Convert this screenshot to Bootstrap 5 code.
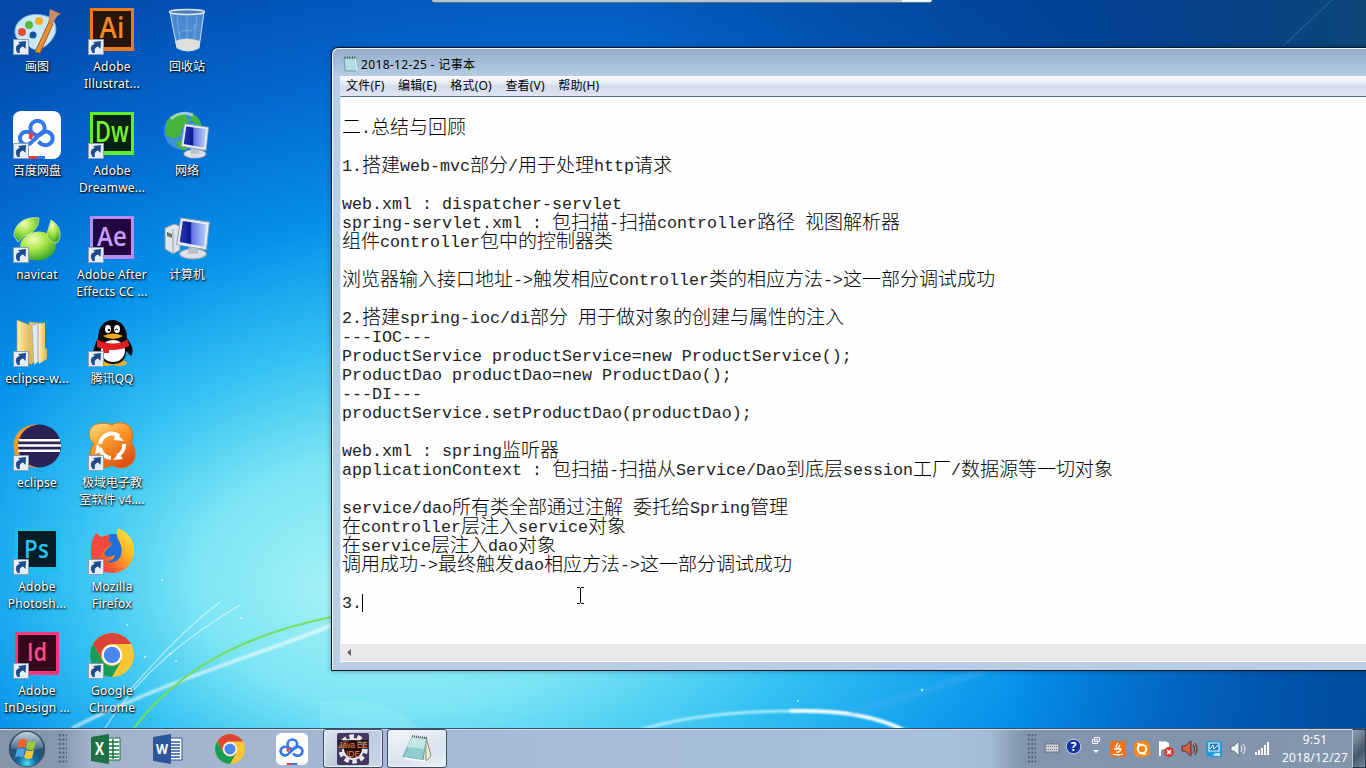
<!DOCTYPE html>
<html lang="zh-CN">
<head>
<meta charset="utf-8">
<title>Desktop</title>
<link href="https://cdn.jsdelivr.net/npm/bootstrap@5.3.0/dist/css/bootstrap.min.css" rel="stylesheet">
<style>
body{width:1366px;height:768px;font:12px/17px "Noto Sans","Noto Sans CJK SC",sans-serif;background:#0450b4;color:#000}
.wall{left:0;top:0;width:1366px;height:768px}
.icons{display:grid;grid-auto-flow:column;grid-template-rows:repeat(7,104px);grid-auto-columns:75px;justify-content:start;height:728px}
.shortcut{width:74px;padding-top:7px;color:#fff;text-align:center;white-space:nowrap;text-shadow:1px 1px 2px #000,0 1px 2px rgba(0,0,0,.8)}
.shortcut svg{display:block;margin-bottom:3px;overflow:visible}
.shortcut svg text{stroke:currentColor;stroke-width:0;text-shadow:none}
.ltn{letter-spacing:.22px}
.dock{left:432px;top:0;width:500px;height:3px;background:linear-gradient(90deg,#b2c6d0 94%,#e9fbff 94%);border-bottom:1px solid #56748a;border-radius:0 0 3px 3px}
.win{left:331px;top:47px;width:1050px;height:624px;border:1px solid #0a1828;border-radius:7px 0 0 0;background:#b9cde4;box-shadow:inset 1px 1px 0 #eef7fd,0 0 5px rgba(0,0,30,.35);padding:1px 0 0 8px}
.titlebar{height:27px;margin-left:-7px;padding:3px 0 0 10px;gap:3px;background:linear-gradient(#96aecb,#b4cde4);border-radius:6px 0 0 0}
.titlebar span{letter-spacing:.35px}
.menus{height:20px;background:linear-gradient(#fafcff 0,#e4eaf6 38%,#d3dbec 50%,#dfe4f2 100%);padding-left:6px;gap:13.5px;line-height:20px;font-size:12px;letter-spacing:.2px}
.page{height:548px;background:#fdfefd;border-top:1px solid #4d6b8c;border-left:1px solid #e8eef4;padding:3px 0 0 1px}
.page pre{font:16.66px/19px "Liberation Mono",monospace;color:#222;margin:0;overflow:visible}
.page .han{font:300 19px/0 "Noto Sans CJK SC",sans-serif;vertical-align:-1px;color:#000}
.page .ln{height:19px;white-space:pre}
.caret-bar{display:inline-block;width:1px;height:18px;background:#000;vertical-align:-4px}
.hscroll{height:18px;background:#e9e9ea;border-bottom:1px solid #fff;padding:5px 0 0 6px}
.ibeam{left:576px;top:587px}
.taskbar{left:0;top:728px;width:1366px;height:40px;border-top:1px solid #38506c;box-shadow:inset 0 1px 0 #d0dcea;background:linear-gradient(90deg,#8494a9 0,#8797ad 62px,#a3b2cb 90px,#a5bad6 480px,#a7c0dc 950px,#a2bad5 990px,#8295ad 1022px,#8394ab 1366px)}
.slot{width:62px}
.task{width:60px;height:39px;border:1px solid #3c4d64;border-radius:3px;background:linear-gradient(135deg,#e0e7f1,#bccadd 50%,#cbd8e8);box-shadow:inset 0 0 0 1px #e9f0f8}
.task.on{background:linear-gradient(160deg,#f2f6fa,#dae4ee 60%,#e9f0f6)}
.grip{width:9px;height:31px;background:radial-gradient(circle,#3c4859 0,#3c4859 .8px,transparent 1.1px) 0 0/3.6px 4.4px}
.clock{width:74px;color:#fff;font-size:12px;line-height:18px;text-align:center}
.peek{width:14px;height:39px;border:1px solid #2f3c4c;border-left-color:#bccbd9;background:linear-gradient(135deg,#95a3b3,#46576a 60%,#76869a)}
</style>
</head>
<body class="position-relative overflow-hidden m-0">
<svg class="wall position-absolute" viewBox="0 0 1366 768">
<defs>
<radialGradient id="sky" gradientUnits="userSpaceOnUse" cx="0" cy="0" r="1" fx="-.27" fy=".08" gradientTransform="translate(620 540) scale(1020 640)">
<stop offset="0" stop-color="#a6f2f6"/><stop offset=".2" stop-color="#7ce5f4"/><stop offset=".38" stop-color="#2fbff2"/><stop offset=".56" stop-color="#0590ea"/><stop offset=".76" stop-color="#0469d0"/><stop offset="1" stop-color="#0448a8"/></radialGradient>
<linearGradient id="dark" x1="0" x2="1"><stop offset=".45" stop-color="#003a80" stop-opacity="0"/><stop offset=".78" stop-color="#003c88" stop-opacity=".65"/><stop offset="1" stop-color="#0d4674" stop-opacity=".9"/></linearGradient>
<linearGradient id="deep" x1="0" x2="1"><stop offset=".74" stop-color="#00489c" stop-opacity="0"/><stop offset="1" stop-color="#004896" stop-opacity=".85"/></linearGradient>
<filter id="soft"><feGaussianBlur stdDeviation="1.2"/></filter>
</defs>
<rect width="1366" height="768" fill="url(#sky)"/>
<rect width="1366" height="300" fill="url(#dark)"/>
<rect y="560" width="1366" height="208" fill="url(#deep)"/>
<path d="M320 702Q380 690 425 733H320Z" fill="#9df0fa" opacity=".3"/>
<g fill="none" stroke="#fff">
<path d="M72 728C180 675 260 655 345 620" stroke-width="3" opacity=".7" filter="url(#soft)"/>
<path d="M105 728C142 670 190 635 240 605M130 690C165 650 190 625 220 602" stroke-width="1.300" opacity=".55"/>
<path d="M134 728C175 674 237 636 332 617" stroke="#75dd60" stroke-width="2.200"/>
<path d="M640 730C690 714 745 711 795 711S875 716 912 734" stroke="#b9f1ff" stroke-width="2.500" filter="url(#soft)"/>
<path d="M790 711C835 710 875 714 908 732" stroke-width="3" filter="url(#soft)"/>
<path d="M1332 0L1283 46" stroke="#4283bd" opacity=".6"/>
<path d="M850 712C900 700 930 690 990 668" stroke="#46aff4" stroke-width="8" opacity=".3" filter="url(#soft)"/>
</g>
<g fill="#d8feff" opacity=".8"><circle cx="127" cy="625" r="1"/><circle cx="170" cy="654" r="1.200"/><circle cx="241" cy="618" r="1"/><circle cx="145" cy="657" r="1.200"/><circle cx="176" cy="661" r="1"/><circle cx="162" cy="580" r="1"/><circle cx="922" cy="690" r="1.200"/><circle cx="798" cy="701" r="1"/></g>
</svg>

<svg width="0" height="0" class="position-absolute"><defs>
<linearGradient id="gOr" x1="0" x2=".6" y2="1"><stop offset="0" stop-color="#ffe58a"/><stop offset=".45" stop-color="#fb9a2c"/><stop offset="1" stop-color="#de5411"/></linearGradient>
<linearGradient id="gBlue"><stop offset="0" stop-color="#2638b6"/><stop offset=".4" stop-color="#0b1a92"/><stop offset=".45" stop-color="#5d74e2"/><stop offset="1" stop-color="#bcd0fa"/></linearGradient>
<radialGradient id="gGreen" cx=".4" cy=".25" r=".75"><stop offset="0" stop-color="#f0ffb4"/><stop offset=".5" stop-color="#a4e444"/><stop offset="1" stop-color="#3ba52a"/></radialGradient>
<linearGradient id="gFox" x1="1" x2="0" y2="1"><stop offset="0" stop-color="#fff44a"/><stop offset=".4" stop-color="#ffae22"/><stop offset=".7" stop-color="#fb5a31"/><stop offset="1" stop-color="#e42264"/></linearGradient>
<linearGradient id="gYel"><stop offset="0" stop-color="#fff0a8"/><stop offset="1" stop-color="#dcb14f"/></linearGradient>
<symbol id="arrow" viewBox="0 0 16 16"><path d="M.5.5h15v15H.5z" fill="#e9eff8" stroke="#8d9cb0"/><path d="M4.500 14C1.500 9.500 3 5.500 7 5L5 3l8-1-.5 8-2.500-2.500C7.500 8 6 10 7 14z" fill="#1d4a8c"/></symbol>
<symbol id="chrome" viewBox="0 0 44 44"><circle cx="22" cy="22" r="22" fill="#fbc535"/><path d="M3 11A22 22 0 0 1 41 11H22A11 11 0 0 0 12.500 27.500z" fill="#db4437"/><path d="M3 11A22 22 0 0 0 22 44L31.500 27.500A11 11 0 0 1 12.500 27.500z" fill="#189c57"/><circle cx="22" cy="22" r="10.200" fill="#fff"/><circle cx="22" cy="22" r="8.200" fill="#4b87ed"/></symbol>
<symbol id="pan" viewBox="0 0 48 48"><rect width="48" height="48" rx="8" fill="#fff"/><g fill="none" stroke="#3377ed" stroke-width="4"><circle cx="24.500" cy="17" r="7.200"/><path d="M19 30.500A6.500 6.500 0 1 1 18 22.500M18.500 30.500C23 29 26 21.500 31 20.800A6.800 6.800 0 1 1 31.500 34C28 34 27 32 25.500 30.500"/></g><path d="M17 20l4 3.500-2.500 5-3-1z" fill="#ed3e45"/><path d="M16 45h8v3h-8z" fill="#ed3e45"/><path d="M24 45h8v3h-8z" fill="#3377ed"/></symbol>
<symbol id="screen" viewBox="0 0 38 42"><ellipse cx="20" cy="36" rx="13" ry="5" fill="#dce1e7" stroke="#98a4b1"/><path d="M16 27l9 3v6h-10z" fill="#b6c0cc"/><path d="M8 1l28 4-3 27L4 27z" fill="#e9edf0" stroke="#92a0b0"/><path d="M10 4l23 3-2 22L7 24.500z" fill="url(#gBlue)"/></symbol>
</defs></svg>

<main class="icons position-relative">
<div class="shortcut"><svg width="75" height="48" viewBox="-13 0 75 48"><path d="M2 26C1 14 14 5 29 8c14 2 17 14 11 23C33 42 21 46 16 39c-4-5-13-4-14-13z" fill="#c9e8f7" stroke="#7bafd1"/><circle cx="9" cy="25" r="4" fill="#e84c38"/><circle cx="16" cy="18" r="4" fill="#56b83a"/><circle cx="26" cy="14" r="4" fill="#f6ae24"/><circle cx="20" cy="28" r="3.500" fill="#13529b"/><path d="M22 45L36 15l4 2L27 46z" fill="#e79138" stroke="#a85b1c"/><path d="M35 15C37 8 36 5 37 2l11 5c-5 2-6 6-8 10z" fill="#c78d62"/><use href="#arrow" y="32" width="16" height="16"/></svg>画图</div>
<div class="shortcut"><svg width="75" height="48" viewBox="-13 0 75 48"><use href="#pan" width="48" height="48"/><use href="#arrow" y="32" width="16" height="16"/></svg>百度网盘</div>
<div class="shortcut ltn"><svg width="75" height="48" viewBox="-13 0 75 48"><ellipse cx="25" cy="31" rx="18" ry="14.500" transform="rotate(-8 25 31)" fill="url(#gGreen)"/><path d="M1 21C1 9 12 1 26 3 26 13 19 19 11 21L5 27z" fill="url(#gGreen)" stroke="#e4f9b9" stroke-width=".7"/><path d="M38 5c9 5 12 16 6 23-6 0-10-5-10-9z" fill="url(#gGreen)" stroke="#e4f9b9" stroke-width=".7"/><use href="#arrow" y="32" width="16" height="16"/></svg>navicat</div>
<div class="shortcut ltn"><svg width="75" height="48" viewBox="-13 0 75 48"><path d="M4 1l15 6v39L4 36z" fill="url(#gYel)" stroke="#c59a42" stroke-width=".6"/><path d="M16 3l15 1v36l-12 4z" fill="#e4bf68"/><path d="M19 6l10-2v36l-8 6z" fill="#e6eaee" stroke="#8c98a0" stroke-width=".6"/><path d="M25 6v36" stroke="#9aa7af"/><path d="M27 7l5-4v26l2 1v10l-8 5z" fill="url(#gYel)"/><use href="#arrow" y="32" width="16" height="16"/></svg>eclipse-w...</div>
<div class="shortcut ltn"><svg width="75" height="48" viewBox="-13 0 75 48"><circle cx="22" cy="23" r="21.500" fill="#f39a28"/><circle cx="26.500" cy="23" r="21.500" fill="#2c2255"/><path d="M6 17.200h41M5 22.500h43M5 27.800h42" stroke="#fff" stroke-width="2.500"/><use href="#arrow" y="32" width="16" height="16"/></svg>eclipse</div>
<div class="shortcut ltn"><svg width="75" height="48" viewBox="-13 0 75 48"><path d="M2 1h44v43H2z" fill="#1dbfe8"/><path d="M5 4h38v36H5z" fill="#061c26"/><text x="23.500" y="31" font-family="Open Sans" font-size="26" font-weight="600" textLength="25" lengthAdjust="spacingAndGlyphs" text-anchor="middle" fill="#24c3f3">Ps</text><use href="#arrow" y="32" width="16" height="16"/></svg>Adobe<br>Photosh...</div>
<div class="shortcut ltn"><svg width="75" height="48" viewBox="-13 0 75 48"><path d="M2 1h44v43H2z" fill="#fc3780"/><path d="M5 4h38v36H5z" fill="#36061b"/><text x="24" y="30" font-family="Open Sans" font-size="26" font-weight="600" textLength="20" lengthAdjust="spacingAndGlyphs" text-anchor="middle" fill="#ff4b96">Id</text><use href="#arrow" y="32" width="16" height="16"/></svg>Adobe<br>InDesign ...</div>

<div class="shortcut ltn"><svg width="75" height="48" viewBox="-13 0 75 48"><path d="M2 1h44v43H2z" fill="#ee7a1d"/><path d="M5 4h38v36H5z" fill="#281509"/><text x="24" y="31" font-family="Open Sans" font-size="28" font-weight="600" textLength="25" lengthAdjust="spacingAndGlyphs" text-anchor="middle" fill="#fc8622">Ai</text><use href="#arrow" y="32" width="16" height="16"/></svg>Adobe<br>Illustrat...</div>
<div class="shortcut ltn"><svg width="75" height="48" viewBox="-13 0 75 48"><path d="M2 1h44v43H2z" fill="#62ef26"/><path d="M5 4h38v36H5z" fill="#082315"/><text x="24" y="31" font-family="Open Sans" font-size="28" font-weight="600" textLength="34" lengthAdjust="spacingAndGlyphs" text-anchor="middle" fill="#79f22c">Dw</text><use href="#arrow" y="32" width="16" height="16"/></svg>Adobe<br>Dreamwe...</div>
<div class="shortcut ltn"><svg width="75" height="48" viewBox="-13 0 75 48"><path d="M2 1h44v43H2z" fill="#b98bf5"/><path d="M5 4h38v36H5z" fill="#210740"/><text x="24" y="31" font-family="Open Sans" font-size="27" font-weight="600" textLength="30" lengthAdjust="spacingAndGlyphs" text-anchor="middle" fill="#ca9cfb">Ae</text><use href="#arrow" y="32" width="16" height="16"/></svg>Adobe After<br>Effects CC ...</div>
<div class="shortcut"><svg width="75" height="48" viewBox="-13 0 75 48"><ellipse cx="18" cy="44" rx="8" ry="3" fill="#f8ae20"/><ellipse cx="31" cy="44" rx="8" ry="3" fill="#f8ae20"/><path d="M10 19C10-5 39-5 39 19c6 8 7 14 4 18l-5-5c0 9-5 13-13 13S12 40 12 32l-5 5C4 33 6 27 10 19z" fill="#090909"/><ellipse cx="25" cy="32" rx="12" ry="11" fill="#fff"/><path d="M9 20c9 6 23 6 31 0l1 7c-9 5-22 5-32 1z" fill="#df1d20"/><path d="M15 27h6v7h-6z" fill="#df1d20"/><ellipse cx="20" cy="10" rx="3" ry="4" fill="#fff"/><ellipse cx="29" cy="10" rx="3" ry="4" fill="#fff"/><circle cx="21" cy="11" r="1.200"/><path d="M27 11q1.500-2 3 0" fill="none" stroke="#000"/><path d="M15 17q10-5 20 0-10 6-20 0" fill="#faad1c"/><use href="#arrow" y="32" width="16" height="16"/></svg>腾讯QQ</div>
<div class="shortcut"><svg width="75" height="48" viewBox="-13 0 75 48"><path d="M24 2C29-2 42-1 44 8c2 6 0 9-1 12 5 5 6 16 0 21-5 5-14 5-19 1-8 5-18 2-21-5-2-6 0-13 3-16C-2 14 1 3 9 1c6-1 12-1 15 1z" fill="url(#gOr)" stroke="#d77116"/><path d="M12 21A12 12 0 0 1 31 13M36 21A12 12 0 0 1 29 33M23 35A12 12 0 0 1 12 25" fill="none" stroke="#fff" stroke-width="4"/><path d="M27 9l9 9-10-1zM35 36l-10 1 6-7zM9 21l7 7-9 3z" fill="#fff"/><use href="#arrow" y="32" width="16" height="16"/></svg>极域电子教<br>室软件 v4....</div>
<div class="shortcut ltn"><svg width="75" height="48" viewBox="-13 0 75 48"><circle cx="25" cy="23" r="16" fill="#1f6fd6"/><path d="M30 1c9 4 17 11 16 24C45 38 36 46 24 46 9 46 0 34 4 19L8 6l5 4c4-2 7-1 9-2l-2 6 4 3-6 6c-3 3-1 7 3 7l6-2c-1 4-4 6-9 7 13 3 20-8 13-21-3-5-2-9-1-13z" fill="url(#gFox)"/><path d="M8 6l5 4c4-2 7-1 9-2l-2 6 4 3-6 4-7 8-7 5C1 21 4 12 8 6z" fill="#f4483f"/><use href="#arrow" y="32" width="16" height="16"/></svg>Mozilla<br>Firefox</div>
<div class="shortcut ltn"><svg width="75" height="48" viewBox="-13 0 75 48"><use href="#chrome" x="2" y="2" width="44" height="44"/><use href="#arrow" y="32" width="16" height="16"/></svg>Google<br>Chrome</div>

<div class="shortcut"><svg width="75" height="48" viewBox="-13 0 75 48"><path d="M7 5h34l-5 36q-11 6-22 0z" fill="#85b7e6" fill-opacity=".55" stroke="#c9dff2"/><path d="M12 34q11-5 25 0l-1 7q-11 6-22 0z" fill="#dfdfd9"/><path d="M14 10l3 26M34 9l-3 25M24 10v24M16 27c7-10 12 5 16-10" stroke="#b6d6f5" opacity=".4" fill="none"/><ellipse cx="24" cy="5" rx="17.500" ry="2.500" fill="#527fae" stroke="#dce8f2" stroke-width="1.500"/></svg>回收站</div>
<div class="shortcut"><svg width="75" height="48" viewBox="-13 0 75 48"><circle cx="20" cy="20" r="19" fill="#398fda"/><path d="M3 13C6 4 15 1 22 3l4 8-7 6-2 8-7 3-7-4zM27 2c7 2 11 7 12 15l-6-4-6-5zM13 31l9-3 5 7-5 4c-6 0-8-3-9-8z" fill="#45b43b"/><path d="M8 8c7-6 15-7 22-4" stroke="#d5f2ee" stroke-width="3" opacity=".6" fill="none"/><use href="#screen" x="14" y="12" width="34" height="36"/></svg>网络</div>
<div class="shortcut"><svg width="75" height="48" viewBox="-13 0 75 48"><path d="M2 13l9-4 6 2v24l-7 4-8-5z" fill="#dfe5e9" stroke="#8799a8"/><path d="M4 17l5 2v4l-5-2z" fill="#61786d"/><path d="M10 14v24" stroke="#91a2b0"/><use href="#screen" x="9" y="2" width="40" height="43"/></svg>计算机</div>
</main>

<div class="dock position-absolute"></div>

<section class="win position-absolute">
<header class="titlebar d-flex align-items-center">
<svg width="15" height="16" viewBox="0 0 15 16"><path d="M1 2h11l2 13H2z" fill="#a9d9dc" stroke="#648f96" stroke-width=".7"/><path d="M12 2l2 13" stroke="#fff"/><path d="M1.500 1.500h11" stroke="#3d4b50" stroke-dasharray="1 1.500" stroke-width="2"/><path d="M3 6h8M3.500 9h8M4 12h7" stroke="#d9f5f5" stroke-width=".8"/></svg>
<span>2018-12-25 - 记事本</span></header>
<nav class="menus d-flex"><span>文件(F)</span><span>编辑(E)</span><span>格式(O)</span><span>查看(V)</span><span>帮助(H)</span></nav>
<div class="page"><pre id="note">

二.总结与回顾

1.搭建web-mvc部分/用于处理http请求

web.xml : dispatcher-servlet
spring-servlet.xml : 包扫描-扫描controller路径 视图解析器
组件controller包中的控制器类

浏览器输入接口地址-&gt;触发相应Controller类的相应方法-&gt;这一部分调试成功

2.搭建spring-ioc/di部分 用于做对象的创建与属性的注入
---IOC---
ProductService productService=new ProductService();
ProductDao productDao=new ProductDao();
---DI---
productService.setProductDao(productDao);

web.xml : spring监听器
applicationContext : 包扫描-扫描从Service/Dao到底层session工厂/数据源等一切对象

service/dao所有类全部通过注解 委托给Spring管理
在controller层注入service对象
在service层注入dao对象
调用成功-&gt;最终触发dao相应方法-&gt;这一部分调试成功

3.</pre></div>
<div class="hscroll"><svg class="d-block" width="6" height="8" viewBox="0 0 6 8"><path d="M5 0v7L1 3.500z" fill="#666"/></svg></div>
</section>

<svg class="ibeam position-absolute" width="9" height="17" viewBox="0 0 9 17"><path d="M1 .5h2.500l1 1 1-1H8M4.500 1v15M1 16.500h2.500l1-1 1 1H8" fill="none" stroke="#000"/></svg>

<footer class="taskbar position-absolute d-flex align-items-center">
<svg class="flex-shrink-0" width="54" height="39" viewBox="0 0 54 39"><defs><radialGradient id="orb" cx=".5" cy=".9"><stop offset="0" stop-color="#48e2fb"/><stop offset=".5" stop-color="#166a9e"/><stop offset="1" stop-color="#235073"/></radialGradient><linearGradient id="shine" x2="0" y2="1"><stop offset="0" stop-color="#fff" stop-opacity=".75"/><stop offset="1" stop-color="#fff" stop-opacity=".1"/></linearGradient></defs><circle cx="27" cy="20" r="17.800" fill="url(#orb)" stroke="#42566b"/><path d="M11 19a16 16 0 0 1 32 0q-16 6-32 0z" fill="url(#shine)"/><path d="M19 11q4-2 8 0l-2 8q-4-2-8 0z" fill="#ee6132"/><path d="M28 12q4 2 8 0l-2 8q-4 2-8-.5z" fill="#98c93b"/><path d="M17 20.500q4-2 8 0l-2 8q-4-2-8 0z" fill="#4aa5e6"/><path d="M26 21q4 2 8 0l-2 8q-4 2-8-.5z" fill="#fcc830"/></svg>
<i class="grip ms-1"></i>
<div class="slot d-flex justify-content-center ms-2"><svg width="30" height="30" viewBox="0 0 30 30"><path d="M15 4h14v22H15z" fill="#fff" stroke="#1e7145"/><path d="M18 8h10M18 12h10M18 16h10M18 20h10M18 23h10M22 5v20" stroke="#1e7145" stroke-width="1.500"/><path d="M0 3l18-3v30L0 27z" fill="#1e7145"/><text x="8.500" y="21" font-family="Open Sans" font-size="17" font-weight="700" text-anchor="middle" fill="#fff" textLength="9" lengthAdjust="spacingAndGlyphs">X</text></svg></div>
<div class="slot d-flex justify-content-center"><svg width="30" height="30" viewBox="0 0 30 30"><path d="M15 4h14v22H15z" fill="#fff" stroke="#2b579a"/><path d="M17 8h10M17 11h10M17 14h10M17 17h10M17 20h10M17 23h10" stroke="#2b579a" stroke-width="1.400"/><path d="M0 3l18-3v30L0 27z" fill="#2b579a"/><text x="9" y="20" font-family="Open Sans" font-size="15" font-weight="700" text-anchor="middle" fill="#fff" textLength="12" lengthAdjust="spacingAndGlyphs">W</text></svg></div>
<div class="slot d-flex justify-content-center"><svg width="30" height="30"><use href="#chrome" width="30" height="30"/></svg></div>
<div class="slot d-flex justify-content-center"><svg width="32" height="32"><use href="#pan" width="32" height="32"/></svg></div>
<div class="task d-flex align-items-center justify-content-center"><svg width="32" height="32" viewBox="0 0 32 32"><rect width="32" height="32" rx="2" fill="#453660"/><circle cx="16" cy="16" r="12.500" fill="none" stroke="#e9e9ec" stroke-width="4.500" stroke-dasharray="4.500 3.350"/><circle cx="16" cy="16" r="10" fill="#201015" stroke="#e8e8eb" stroke-width="2"/><path d="M1 7h30v9H1z" fill="#201015" opacity=".75"/><g font-family="Liberation Sans" font-size="9.500" fill="#f98335" text-anchor="middle"><text x="16" y="15" textLength="29" lengthAdjust="spacingAndGlyphs">Java EE</text><text x="16" y="24" textLength="14" lengthAdjust="spacingAndGlyphs">IDE</text></g></svg></div>
<div class="task on d-flex align-items-center justify-content-center ms-1"><svg width="30" height="30" viewBox="0 0 30 30"><path d="M24 3l5 19-5 5z" fill="#f0f0dd" stroke="#898e72"/><path d="M10 3l14 2-3 21-20-3z" fill="#8fcdd0" stroke="#6e9fa3"/><path d="M10 3l14 2-2 10Q10 13 5 13z" fill="#c3e6e6"/><path d="M1 23l20 3 4 1-2 1-20-3z" fill="#f9ffff"/><path d="M10 2l15 2" stroke="#53605c" stroke-width="2" stroke-dasharray="1 1"/></svg></div>
<div class="ms-auto d-flex align-items-center">
<i class="grip"></i>
<svg width="242" height="39" viewBox="1034 729 242 39">
<path d="M1043 744h14v8h-14zM1050 744q0-3 3-3" fill="#d2d5d7" stroke="#687382"/><path d="M1044 746.500h12M1044 749.500h12" stroke="#667" stroke-dasharray="1 1"/>
<circle cx="1071.500" cy="746.500" r="7.300" fill="#1734a6" stroke="#c8d5ef"/><text x="1071.500" y="751" text-anchor="middle" font-family="Open Sans" font-size="12" font-weight="700" fill="#fff">?</text>
<path d="M1092.500 737.500h5v4h-5zM1090.500 739.500h5v4h-5z" fill="#8294ab" stroke="#fff"/><path d="M1091 750h6l-3 3z" fill="#fff"/>
<rect x="1108" y="741" width="16" height="16" rx="1" fill="#ea7420"/><path d="M1116 743q-3 3-1 5M1118 745q-2 2-1 3M1112 749h7q-1 4-5 3M1111 754q5 2 10 0" stroke="#fff" fill="none" stroke-width="1.300"/>
<rect x="1132" y="741" width="16" height="16" rx="5" fill="#f58620"/><circle cx="1140" cy="749" r="4.200" fill="none" stroke="#fff" stroke-width="2"/><path d="M1135 743l5 1-4 3zM1144 755l-5-1 4-3z" fill="#fff"/>
<path d="M1158 741v15" stroke="#fff" stroke-width="2"/><path d="M1159 742q4-2 8 1v7q-4-2-8 0z" fill="#fff"/><circle cx="1167" cy="752" r="5" fill="#d73931"/><path d="M1165 750l4 4M1169 750l-4 4" stroke="#fff" stroke-width="1.500"/>
<path d="M1180 746h3l6-5v15l-6-5h-3z" fill="#d36143" stroke="#5d2a24"/><path d="M1191 745q3 4 0 8M1193 743q4 6 0 12" stroke="#7a352c" stroke-width="1.300" fill="none"/>
<rect x="1204" y="741" width="16" height="16" rx="2" fill="#249cda"/><path d="M1207 743h10v8h-10zM1211 755h7" fill="#1d7fc1" stroke="#e7f7ff" stroke-width="1.200"/><path d="M1208 749l3-4 1 4 4-4" stroke="#fff" fill="none"/><path d="M1213 753h5v3h-5z" fill="#bbe8fa"/>
<path d="M1229 746h3l5-5v15l-5-5h-3z" fill="#eef3f8" stroke="#4c5969" stroke-width=".7"/><path d="M1239 746q2 3 0 6M1241 744q4 5 0 10" stroke="#fff" fill="none"/>
<g fill="#fff"><path d="M1253 752h2v3h-2zM1256 750h2v5h-2zM1259 748h2v7h-2zM1262 745h2v10h-2zM1265 742h2v13h-2z"/></g>
</svg>
<div class="clock ltn">9:51<br>2018/12/27</div>
<div class="peek ms-0 flex-shrink-0"></div>
</div>
</footer>
<script>
// Notepad lines: Chinese runs take two half-width cells, the caret follows the last line
const note = document.getElementById('note');
note.innerHTML = note.innerHTML.split('\n').map(function (line) {
  return '<div class="ln">' + line.replace(/[\u4e00-\u9fff]+/g, '<span class="han">$&</span>') + '</div>';
}).join('');
note.lastElementChild.insertAdjacentHTML('beforeend', '<span class="caret-bar"></span>');
</script>
<script src="https://cdn.jsdelivr.net/npm/bootstrap@5.3.0/dist/js/bootstrap.bundle.min.js"></script>
</body>
</html>
